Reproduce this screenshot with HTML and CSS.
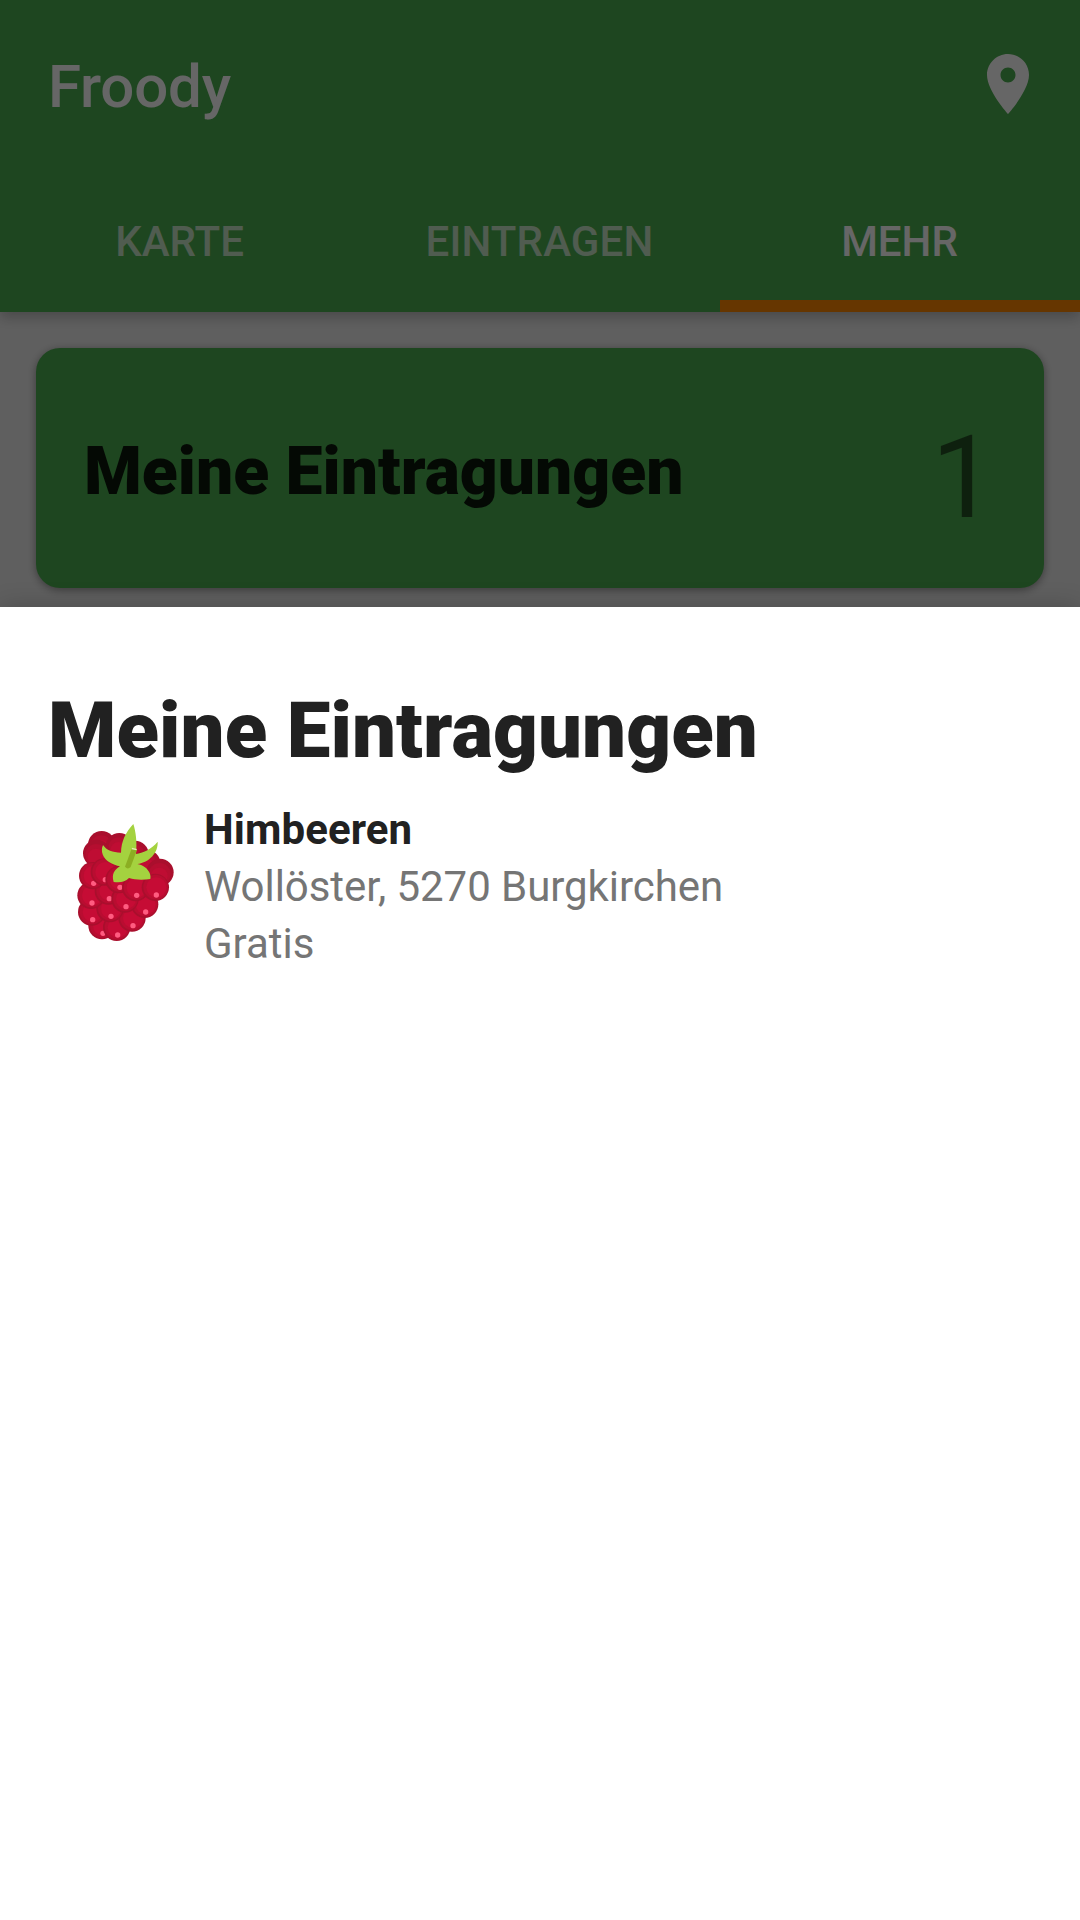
FILE: index.html
```html
<!DOCTYPE html>
<html lang="de">
<head>
<meta charset="utf-8">
<title>Froody</title>
<link rel="stylesheet" href="styles.css">
</head>
<body>
<div class="page">
  <header class="appbar">
    <div class="toolbar">
      <h1 class="brand">Froody</h1>
      <svg class="pin" viewBox="0 0 24 24"><path d="M12 2C8.13 2 5 5.13 5 9c0 5.25 7 13 7 13s7-7.75 7-13c0-3.87-3.13-7-7-7zm0 9.500c-1.380 0-2.500-1.120-2.500-2.500s1.120-2.500 2.500-2.500 2.500 1.120 2.500 2.500-1.120 2.500-2.500 2.500z"/></svg>
    </div>
    <nav class="tabs">
      <span class="tab">KARTE</span>
      <span class="tab tab-wide">EINTRAGEN</span>
      <span class="tab tab-active">MEHR</span>
    </nav>
  </header>
  <main class="content">
    <section class="card">
      <span class="card-title">Meine Eintragungen</span>
      <span class="card-count">1</span>
    </section>
  </main>
</div>
<div class="scrim">
  <section class="sheet">
    <h2 class="sheet-title">Meine Eintragungen</h2>
    <article class="entry">
      <svg class="berry" viewBox="0 0 390 435">
        <defs>
          <g id="drupe">
            <circle r="41" fill="#a90f2d"/>
            <circle cx="-1" cy="5" r="33" fill="#b50e30"/>
            <circle cx="-2" cy="11" r="25" fill="#bf0d33"/>
          </g>
          <g id="lit">
            <circle r="41" fill="#a90f2d"/>
            <circle cx="1" cy="-1" r="37" fill="#b90d31"/>
            <circle cx="3" cy="0" r="30" fill="#c60c35"/>
            <circle cx="3" cy="23" r="8" fill="#ff5c80"/>
          </g>
        </defs>
        <path fill="#b80d30" d="M120 90L230 95L300 170L290 260L200 350L110 340L80 220Z"/>
        <use href="#drupe" x="125" y="104"/>
        <use href="#drupe" x="178" y="110"/>
        <use href="#drupe" x="110" y="130"/>
        <use href="#drupe" x="225" y="133"/>
        <use href="#drupe" x="260" y="160"/>
        <use href="#drupe" x="300" y="187"/>
        <use href="#lit" x="126" y="347"/>
        <use href="#lit" x="170" y="352"/>
        <use href="#lit" x="95" y="306"/>
        <use href="#lit" x="216" y="324"/>
        <use href="#lit" x="150" y="296"/>
        <use href="#lit" x="254" y="283"/>
        <use href="#lit" x="93" y="256"/>
        <use href="#lit" x="145" y="243"/>
        <use href="#lit" x="195" y="267"/>
        <use href="#lit" x="98" y="197"/>
        <use href="#lit" x="133" y="186"/>
        <use href="#lit" x="177" y="209"/>
        <use href="#lit" x="227" y="233"/>
        <use href="#lit" x="286" y="232"/>
        <path fill="#a4d23f" d="M220 42C196 68 184 94 183 128C157 127 140 121 129 105C120 124 130 146 147 156C158 163 170 167 180 169C164 179 154 192 161 216C181 219 195 216 207 204C225 210 250 210 271 207C274 193 266 182 258 174C250 167 240 163 232 162C268 157 295 128 293 95C274 119 248 128 228 132C232 98 227 62 220 42Z"/>
        <path fill="#8cae22" d="M216 113L231 119L212 171Q203 180 195 170Z"/>
        <path fill="#e3edb5" d="M216 113L231 117L229 121L215 118Z"/>
      </svg>
      <div class="entry-text">
        <strong class="entry-name">Himbeeren</strong>
        <span class="entry-line entry-place">Wollöster, 5270 Burgkirchen</span>
        <span class="entry-line">Gratis</span>
      </div>
    </article>
  </section>
</div>
</body>
</html>
```
FILE: styles.css
```css
* { box-sizing: border-box; }
body { margin: 0; font-family: Roboto, "Liberation Sans", sans-serif; background: #eee; }
h1, h2 { margin: 0; }
.page { height: 1920px; overflow: hidden; }
.appbar { height: 312px; background: #4caf50; color: #fff; box-shadow: 0 6px 12px rgba(0,0,0,.22); display: flex; flex-direction: column; }
.toolbar { height: 168px; padding: 0 36px 0 48px; display: flex; align-items: center; justify-content: space-between; }
.brand { font-size: 60px; font-weight: 500; line-height: 70px; padding-top: 6px; letter-spacing: -.2px; }
.pin { width: 72px; height: 72px; fill: #fff; }
.tabs { flex: 1; display: grid; grid-template-columns: repeat(3, 1fr); }
.tab { display: flex; align-items: center; justify-content: center; padding: 2px 1px 0 0; font-size: 42px; font-weight: 500; color: rgba(255,255,255,.7); }
.tab-wide { letter-spacing: .15px; }
.tab-active { color: #fff; box-shadow: inset 0 -12px #ff8800; }
.content { padding: 36px; }
.card { height: 240px; padding: 0 48px; border-radius: 24px; background: #4caf50; box-shadow: 0 2px 8px rgba(0,0,0,.4); display: flex; align-items: center; justify-content: space-between; }
.card-title { font-size: 66px; font-weight: 900; color: rgba(0,0,0,.87); padding-top: 6px; }
.card-count { font-size: 115px; color: rgba(0,0,0,.54); padding-top: 18px; }
.scrim { position: absolute; inset: 0; height: 1920px; padding-top: 607px; background: rgba(0,0,0,.6); overflow: hidden; }
.sheet { height: 1313px; padding: 78px 48px 0; background: #fff; box-shadow: 0 0 24px rgba(0,0,0,.2); }
.sheet-title { font-size: 78px; font-weight: 900; line-height: 92px; color: #212121; letter-spacing: .08px; }
.entry { display: flex; padding: 23px 0 0 12px; }
.berry { width: 130px; height: 145px; margin-top: 10px; flex: none; }
.entry-text { display: flex; flex-direction: column; padding: 1px 0 0 14px; font-size: 42px; line-height: 57px; }
.entry-name { font-weight: 700; color: #212121; letter-spacing: .1px; }
.entry-line { color: #757575; }
.entry-place { letter-spacing: -.05px; }
```
